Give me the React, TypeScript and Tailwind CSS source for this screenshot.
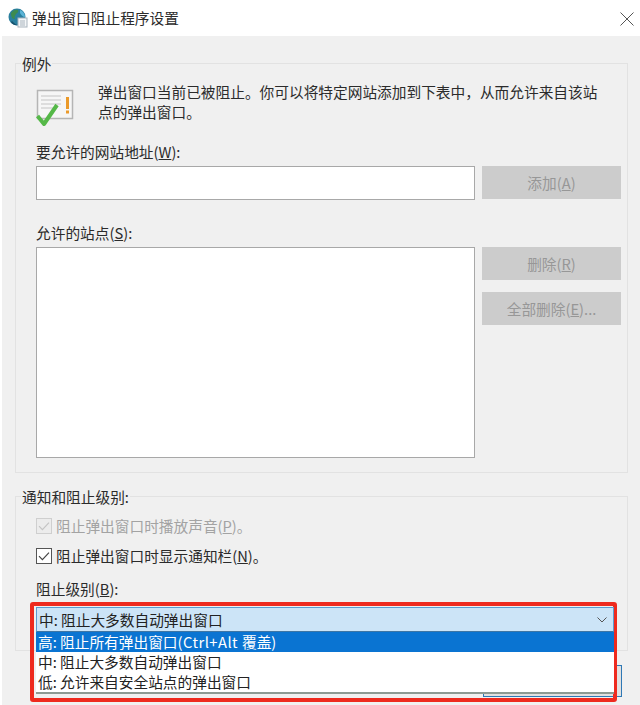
import React from "react";

const font = { fontFamily: '"Noto Sans CJK SC", "Noto Sans", sans-serif' };

function Btn({ label, k, rest = ")", className = "" }: { label: string; k: string; rest?: string; className?: string }) {
  return (
    <div className={`w-[139px] h-[33px] bg-[#cccccc] text-[#979797] flex items-center justify-center text-[14.7px] ${className}`}>
      {label}(<span className="underline">{k}</span>{rest}
    </div>
  );
}

function Check({ disabled }: { disabled?: boolean }) {
  const c = disabled ? "#c4c4c4" : "#444444";
  return (
    <svg width="16" height="16" viewBox="0 0 16 16" className="shrink-0">
      <rect x="0.5" y="0.5" width="15" height="15" fill={disabled ? "#ececec" : "#ffffff"} stroke={disabled ? "#cfcfcf" : "#555555"} />
      <path d="M3 8.2 L6.4 11.6 L13 4.6" fill="none" stroke={c} strokeWidth="1.2" />
    </svg>
  );
}

function NoticeIcon() {
  return (
    <svg width="40" height="40" viewBox="0 0 40 40">
      <rect x="1.5" y="2.5" width="35" height="28" fill="#f6f6f6" stroke="#b5b5b5" strokeWidth="1.5" />
      <path d="M5 8h20M5 12h20M5 16h20M5 20h14" stroke="#d5d5d5" strokeWidth="1.5" />
      <rect x="30" y="9" width="3" height="12" fill="#eb9a2a" />
      <rect x="30" y="22.5" width="3" height="3" fill="#eb9a2a" />
      <path d="M1.5 28 L8 36 L21 17" fill="none" stroke="#55b848" strokeWidth="4" strokeLinejoin="round" />
    </svg>
  );
}

function Globe() {
  return (
    <svg width="20" height="20" viewBox="0 0 20 20">
      <circle cx="9" cy="9" r="8.5" fill="#2a7f9e" />
      <path d="M3 5c2-3 5-4 7-3 1 2-1 3-2 4-1 2-2 3-1 5-2 0-4-1-4-6z" fill="#3d8b4f" />
      <path d="M12 2c3 1 5 4 5 7-2 0-4-2-5-4z" fill="#5cb4d6" />
      <path d="M4 13c2 2 4 4 6 4-3 1-6-1-7-3z" fill="#16506b" />
      <rect x="10" y="10" width="9" height="9" fill="#f4f6f8" stroke="#a9b4bd" />
      <path d="M12 13h5M12 15h5M12 17h5" stroke="#a9b4bd" />
    </svg>
  );
}

export default function App() {
  return (
    <div style={font} className="relative w-[640px] h-[705px] overflow-hidden bg-white text-[14.7px] text-[#2b2b2b] leading-[20px]">
      <div className="h-[36px] flex items-center pl-[8px] pr-[6px]">
        <Globe />
        <span className="ml-[4px] text-[14.7px] -mt-[1px]">弹出窗口阻止程序设置</span>
        <svg width="14" height="14" viewBox="0 0 14 14" className="ml-auto mt-[1px]">
          <path d="M0.5 0.5 L13.5 13.5 M13.5 0.5 L0.5 13.5" stroke="#555555" strokeWidth="1" fill="none" />
        </svg>
      </div>

      <div className="h-[669px] ml-[2px] bg-[#f0f0f0] pl-[13px] pr-[12px] pt-[27px] flex flex-col">
        <div className="h-[410px] border border-[#e2e2e2] relative pl-[20px] pr-[6px] pt-[24px]">
          <span className="absolute left-[5px] -top-[10px] bg-[#f0f0f0] px-[1px]">例外</span>
          <div className="flex h-[40px]">
            <NoticeIcon />
            <p className="ml-[22px] w-[510px] leading-[20px] -mt-[6px]">
              弹出窗口当前已被阻止。你可以将特定网站添加到下表中，从而允许来自该站点的弹出窗口。
            </p>
          </div>
          <div className="mt-[14px] h-[20px]">要允许的网站地址(<span className="underline">W</span>):</div>
          <div className="mt-[4px] flex justify-between">
            <div className="w-[439px] h-[34px] bg-white border border-[#a8a8a8]" />
            <Btn label="添加" k="A" />
          </div>
          <div className="mt-[23px] h-[20px]">允许的站点(<span className="underline">S</span>):</div>
          <div className="mt-[4px] flex justify-between">
            <div className="w-[439px] h-[211px] bg-white border border-[#a8a8a8]" />
            <div className="flex flex-col gap-[12px]">
              <Btn label="删除" k="R" />
              <Btn label="全部删除" k="E" rest=")..." />
            </div>
          </div>
        </div>

        <div className="mt-[23px] h-[155px] border border-[#e2e2e2] relative pl-[20px] pt-[19px]">
          <span className="absolute left-[5px] -top-[10px] bg-[#f0f0f0] px-[1px]">通知和阻止级别:</span>
          <div className="flex items-center text-[#a3a3a3] h-[20px]">
            <Check disabled />
            <span className="ml-[4px]">阻止弹出窗口时播放声音(<span className="underline">P</span>)。</span>
          </div>
          <div className="flex items-center h-[20px] mt-[10px]">
            <Check />
            <span className="ml-[4px]">阻止弹出窗口时显示通知栏(<span className="underline">N</span>)。</span>
          </div>
          <div className="h-[20px] mt-[13px]">阻止级别(<span className="underline">B</span>):</div>
        </div>

        <div className="mt-[14px] ml-[468px] w-[139px] h-[32px] border border-[#2e78b5] bg-[#e1e1e1]" />
      </div>

      {/* open drop-down list with its red annotation frame */}
      <div className="absolute left-[30px] top-[602px] w-[587px] h-[100px] border-[4px] border-[#ee2a1e] rounded-[3px]" />
      <div className="absolute left-[36px] top-[607px] w-[578px]">
        <div className="h-[25px] bg-[#cce4f7] border border-[#5d9bcf] border-b-[#3f76a4] flex items-center pl-[2px] pr-[6px] text-[#222222]">
          <span>中: 阻止大多数自动弹出窗口</span>
          <svg width="10" height="6" viewBox="0 0 10 6" className="ml-auto">
            <path d="M0.5 0.5 L5 5 L9.5 0.5" fill="none" stroke="#555555" />
          </svg>
        </div>
        <div className="bg-white border-b-[2px] border-[#8d9a93] leading-[20px]">
          <div className="h-[20px] bg-[#0a74d2] text-white pl-[2px]">高: 阻止所有弹出窗口<span className="tracking-[0.5px]">(Ctrl+Alt </span>覆盖)</div>
          <div className="h-[20px] pl-[2px] text-[#222222]">中: 阻止大多数自动弹出窗口</div>
          <div className="h-[20px] pl-[2px] text-[#222222]">低: 允许来自安全站点的弹出窗口</div>
        </div>
      </div>
    </div>
  );
}
